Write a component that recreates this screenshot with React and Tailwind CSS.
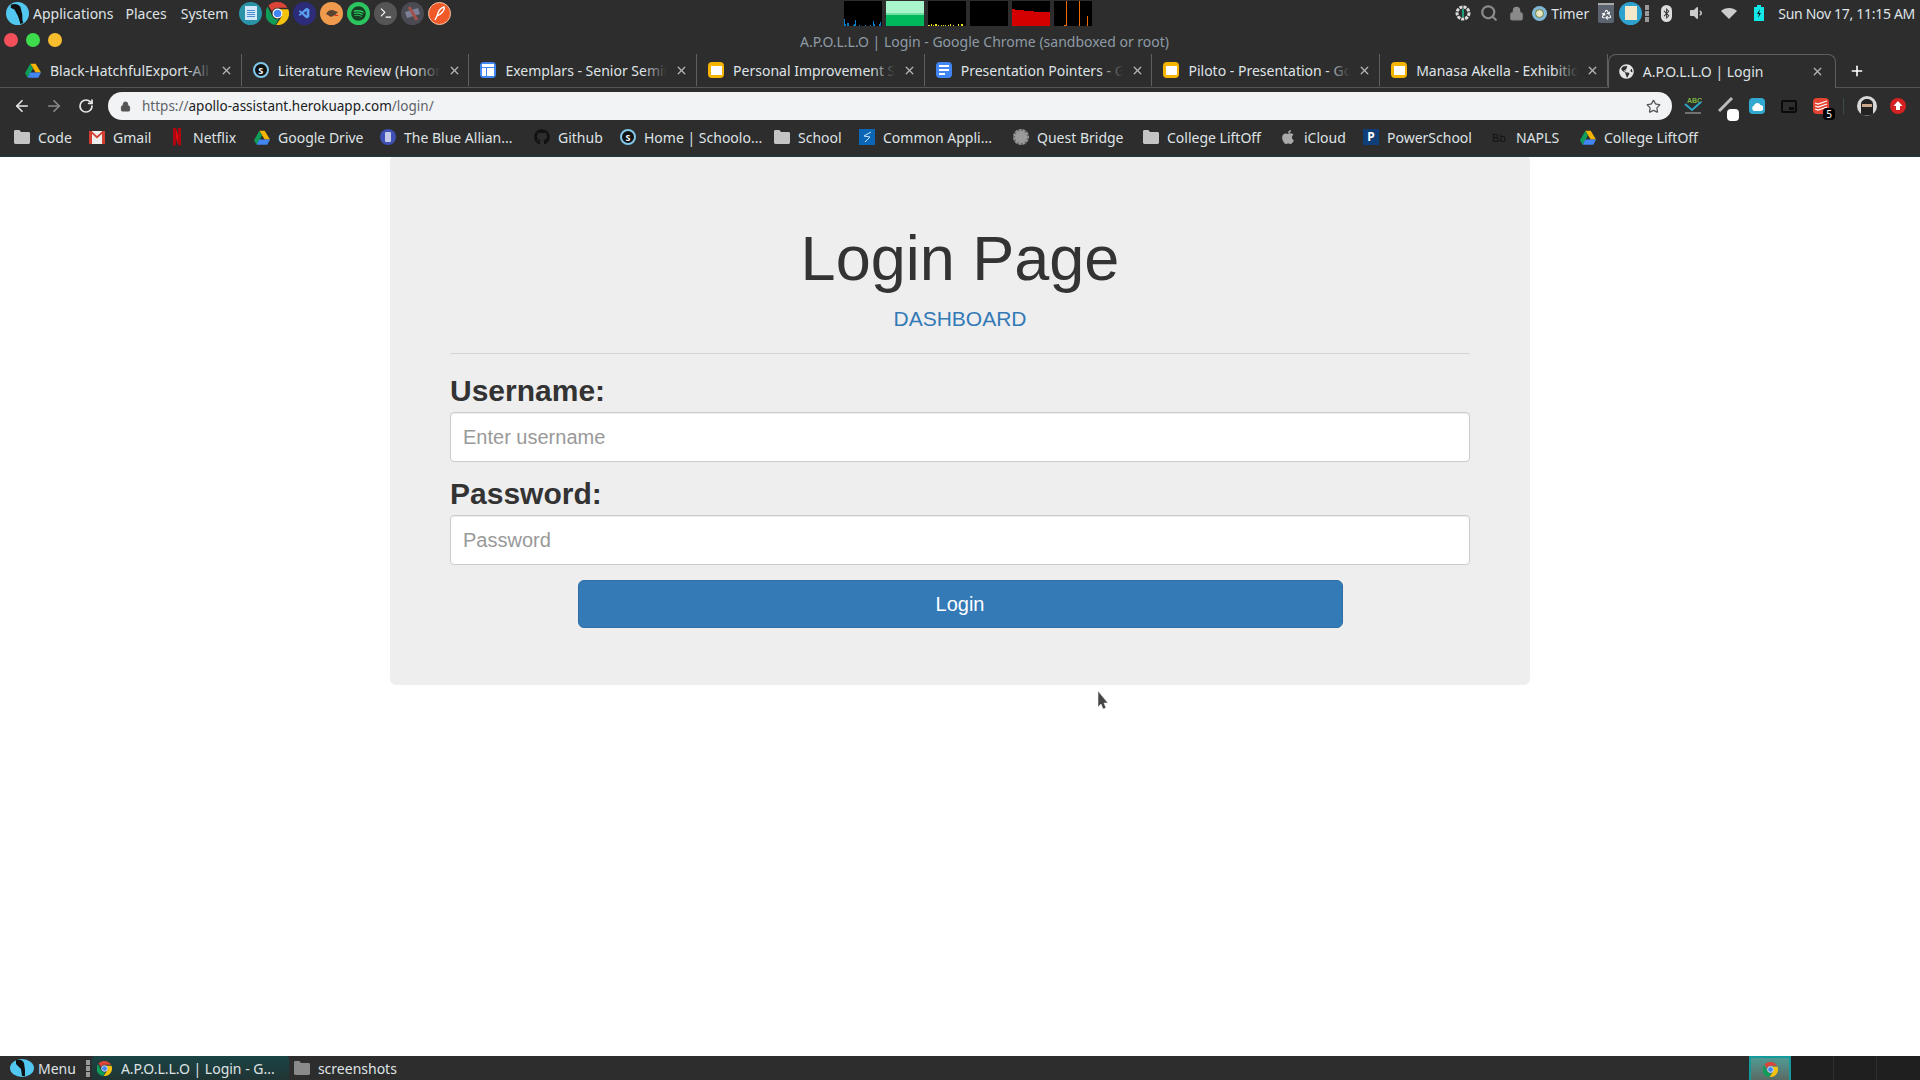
import { ArrowLeft, ArrowRight, Lock, RotateCw, Search, Star, X, Plus, Terminal, Recycle } from 'lucide-react'
import { FaApple, FaBluetoothB, FaGithub, FaGlobeAmericas, FaSpotify, FaVolumeDown } from 'react-icons/fa'
import { VscVscode } from 'react-icons/vsc'

const ui = "font-['Noto_Sans',sans-serif]"

const ChromeIcon = ({ size = 16 }) => (
  <svg width={size} height={size} viewBox="0 0 24 24" className="shrink-0">
    <path d="M12 0a12 12 0 0 1 10.4 6H12a6 6 0 0 0-5.6 3.8L2.5 3.6A12 12 0 0 1 12 0z" fill="#db4437" />
    <path d="M1.6 5 6.8 15a6 6 0 0 0 6.4 2.9L9.7 24A12 12 0 0 1 1.6 5z" fill="#0f9d58" />
    <path d="M23.2 7.5H14a6 6 0 0 1 1.7 8.6L10.6 24A12 12 0 0 0 23.2 7.5z" fill="#f4c20d" />
    <circle cx="12" cy="12" r="4.6" fill="#4285f4" stroke="#fff" strokeWidth="1.2" />
  </svg>
)

const DriveIcon = () => (
  <svg width="16" height="15" viewBox="0 0 24 22" className="shrink-0">
    <path d="M8 1h8l8 13h-8z" fill="#f4b400" />
    <path d="M8 1 0 15l4 7 8-14z" fill="#0f9d58" />
    <path d="M4 22h16l4-8H8z" fill="#4285f4" />
  </svg>
)

const FolderIcon = ({ color = '#c4c4c4' }) => (
  <svg width="16" height="14" viewBox="0 0 16 14" className="shrink-0">
    <path d="M0 1.5C0 .7.6 0 1.4 0h4l1.6 2h7.6c.8 0 1.4.6 1.4 1.4v9.2c0 .8-.6 1.4-1.4 1.4H1.4C.6 14 0 13.4 0 12.6z" fill={color} />
  </svg>
)

const SchoologyIcon = () => (
  <span className="flex h-4 w-4 shrink-0 items-center justify-center rounded-full border-2 border-[#7fc8e8] bg-[#111] text-[9px] font-bold leading-none text-white">S</span>
)

const SheetIcon = ({ kind }) => {
  if (kind === 'slides')
    return (
      <span className="flex h-4 w-4 shrink-0 items-center justify-center rounded-sm bg-[#f4b400]">
        <span className="h-[9px] w-[11px] bg-white" />
      </span>
    )
  if (kind === 'docs')
    return (
      <span className="flex h-4 w-4 shrink-0 flex-col justify-center gap-[2px] rounded-sm bg-[#4285f4] pl-[3px]">
        <span className="h-[2px] w-[10px] bg-white" />
        <span className="h-[2px] w-[10px] bg-white" />
        <span className="h-[2px] w-[6px] bg-white" />
      </span>
    )
  return (
    <span className="flex h-4 w-4 shrink-0 flex-col gap-[1px] rounded-sm bg-[#4285f4] p-[2px]">
      <span className="h-[3px] w-full bg-white" />
      <span className="flex flex-1 gap-[1px]">
        <span className="w-1 bg-white" />
        <span className="flex-1 bg-white" />
      </span>
    </span>
  )
}

const tabIcons = {
  drive: <DriveIcon />,
  schoology: <SchoologyIcon />,
  sites: <SheetIcon kind="sites" />,
  slides: <SheetIcon kind="slides" />,
  docs: <SheetIcon kind="docs" />,
}

const tabs = [
  { title: 'Black-HatchfulExport-All', icon: 'drive' },
  { title: 'Literature Review (Honors)', icon: 'schoology' },
  { title: 'Exemplars - Senior Seminar', icon: 'sites' },
  { title: 'Personal Improvement Speech', icon: 'slides' },
  { title: 'Presentation Pointers - Google', icon: 'docs' },
  { title: 'Piloto - Presentation - Google', icon: 'slides' },
  { title: 'Manasa Akella - Exhibition', icon: 'slides' },
]

const bookmarks = [
  { label: 'Code', w: 'w-[75px]', icon: <FolderIcon /> },
  {
    label: 'Gmail',
    w: 'w-[80px]',
    icon: (
      <svg width="16" height="13" viewBox="0 0 16 13" className="shrink-0">
        <rect width="16" height="13" fill="#eee" />
        <path d="M0 0h3v13H0zM13 0h3v13h-3z" fill="#d23f31" />
        <path d="M0 0h2.5L8 5l5.500-5H16L8 7.500z" fill="#d23f31" />
      </svg>
    ),
  },
  {
    label: 'Netflix',
    w: 'w-[85px]',
    icon: (
      <svg width="16" height="18" viewBox="0 0 16 18" className="shrink-0">
        <path d="M4 0h3l5 17-3-.5z" fill="#e50914" />
        <path d="M4 0h3v17l-3 .8zM9 0h3v17.800L9 17z" fill="#b00610" />
      </svg>
    ),
  },
  { label: 'Google Drive', w: 'w-[126px]', icon: <DriveIcon /> },
  {
    label: 'The Blue Allian...',
    w: 'w-[154px]',
    icon: (
      <span className="flex h-4 w-4 shrink-0 items-center justify-center rounded-full bg-[#3f51b5]">
        <span className="h-[10px] w-[6px] rounded-[1px] bg-[#c5cae9]" />
      </span>
    ),
  },
  { label: 'Github', w: 'w-[86px]', icon: <FaGithub className="h-4 w-4 shrink-0 text-[#111]" /> },
  { label: 'Home | Schoolo...', w: 'w-[154px]', icon: <SchoologyIcon /> },
  { label: 'School', w: 'w-[85px]', icon: <FolderIcon /> },
  {
    label: 'Common Appli...',
    w: 'w-[154px]',
    icon: (
      <span className="flex h-4 w-4 shrink-0 items-center justify-center bg-[#0b66b8]">
        <svg width="10" height="12" viewBox="0 0 10 12" fill="none" stroke="#cfe6f8">
          <path d="M9 1 2 5l6 1-5 5" />
        </svg>
      </span>
    ),
  },
  {
    label: 'Quest Bridge',
    w: 'w-[130px]',
    icon: <span className="h-4 w-4 shrink-0 rounded-full border-2 border-dotted border-[#6b6b6b] bg-[#9a9a9a]" />,
  },
  { label: 'College LiftOff', w: 'w-[137px]', icon: <FolderIcon /> },
  { label: 'iCloud', w: 'w-[83px]', icon: <FaApple className="h-4 w-4 shrink-0 text-[#aaa]" /> },
  {
    label: 'PowerSchool',
    w: 'w-[129px]',
    icon: (
      <span className="flex h-4 w-4 shrink-0 items-center justify-center bg-[#0f3f78] text-[12px] font-bold leading-none text-white">P</span>
    ),
  },
  {
    label: 'NAPLS',
    w: 'w-[88px]',
    icon: <span className="w-4 shrink-0 text-[11px] leading-none text-[#111]">Bb</span>,
  },
  { label: 'College LiftOff', w: 'w-[130px]', icon: <DriveIcon /> },
]

const Bar = ({ x, h, color }) => <rect x={x} y={25 - h} width="1" height={h} fill={color} />

const Graph = ({ children, bg = 'bg-black' }) => (
  <svg width="38" height="25" viewBox="0 0 38 25" className={bg}>
    {children}
  </svg>
)

const cpuBars = [[0, 7], [1, 2], [3, 3], [4, 3], [9, 1], [10, 2], [11, 6], [15, 1], [21, 1], [26, 1], [29, 5], [30, 2], [35, 2], [36, 4]]
const netBars = [[0, 1], [1, 1], [3, 2], [5, 1], [7, 2], [8, 2], [10, 1], [13, 1], [15, 1], [17, 1], [20, 1], [22, 2], [25, 1], [30, 2], [33, 2], [34, 2]]

function SystemPanel() {
  return (
    <div className="flex h-[26px] shrink-0 items-center text-[14px] text-[#dfe3e6]">
      <svg width="23" height="23" viewBox="0 0 24 24" className="ml-[6px] shrink-0">
        <circle cx="12" cy="12" r="12" fill="#52c8f0" />
        <path d="M5 3c4-2 8-1 10 2l2 8c0 3 0 7 1 9l-3 1c-1-4-2-8-4-11L9 8 5 6z" fill="#111" />
      </svg>
      <span className="ml-[4px]">Applications</span>
      <span className="ml-[12px]">Places</span>
      <span className="ml-[14px]">System</span>

      <div className="ml-[11px] flex items-center gap-[4px]">
        <span className="flex h-[23px] w-[23px] items-center justify-center rounded-full bg-[#2a93a8]">
          <span className="flex h-[14px] w-[12px] flex-col justify-center gap-[1px] bg-[#d4e8fb] px-[2px]">
            <span className="h-[1px] bg-[#4a8fd0]" />
            <span className="h-[1px] bg-[#4a8fd0]" />
            <span className="h-[1px] bg-[#4a8fd0]" />
            <span className="h-[1px] bg-[#4a8fd0]" />
          </span>
        </span>
        <ChromeIcon size={23} />
        <span className="flex h-[23px] w-[23px] items-center justify-center rounded-full bg-[#2c2c7a]">
          <VscVscode className="h-[13px] w-[13px] text-[#5aa0f0]" />
        </span>
        <span className="flex h-[23px] w-[23px] items-center justify-center rounded-full bg-[#f09a4e]">
          <svg width="14" height="10" viewBox="0 0 14 10">
            <path d="M1 6c2-4 6-5 9-3l3 1-3 3-4 2z" fill="#5a4330" />
            <rect x="10" y="7" width="3" height="1" fill="#d22" />
          </svg>
        </span>
        <span className="flex h-[23px] w-[23px] items-center justify-center rounded-full bg-[#2cc45f]">
          <FaSpotify className="h-[15px] w-[15px] text-[#163f22]" />
        </span>
        <span className="flex h-[23px] w-[23px] items-center justify-center rounded-full bg-[#555]">
          <Terminal className="h-[14px] w-[14px] text-white" strokeWidth={2} />
        </span>
        <span className="flex h-[23px] w-[23px] items-center justify-center rounded-full bg-[#4a4a52]">
          <svg width="17" height="15" viewBox="0 0 17 15">
            <path d="M1 6 14 2l2 6-13 4z" fill="#7c8098" />
            <path d="M5 1l8 13" stroke="#a0524a" strokeWidth="3" />
          </svg>
        </span>
        <span className="flex h-[23px] w-[23px] items-center justify-center rounded-full border border-[#f3c4a8] bg-[#f05a28]">
          <svg width="13" height="15" viewBox="0 0 13 15" fill="none" stroke="#fff" strokeWidth="1.400">
            <path d="M11 1c1 3-2 6-5 8l-2 1 1-3c1-3 3-5 6-6zM4 10l-2 4" />
          </svg>
        </span>
      </div>

      <div className="ml-[393px] flex items-center gap-[4px]">
        <Graph>
          {cpuBars.map(([x, h]) => (
            <Bar key={x} x={x} h={h} color="#0a7fc8" />
          ))}
        </Graph>
        <Graph bg="bg-[#00b85c]">
          <rect width="38" height="12" fill="#a8f5cc" />
          <rect y="12" width="38" height="2" fill="#6fe0a4" />
        </Graph>
        <Graph>
          {netBars.map(([x, h]) => (
            <Bar key={x} x={x} h={h} color="#f4e021" />
          ))}
        </Graph>
        <Graph />
        <Graph>
          <path d="M0 8h3v1h9v1h10v1h16v14H0z" fill="#d40000" />
        </Graph>
        <Graph>
          <Bar x={12} h={25} color="#f06c00" />
          <Bar x={25} h={25} color="#f06c00" />
          <Bar x={33} h={10} color="#f06c00" />
          <rect x="10" y="24" width="2" height="1" fill="#f06c00" />
        </Graph>
      </div>

      <div className="ml-auto flex items-center">
        <svg width="16" height="16" viewBox="0 0 16 16" className="shrink-0">
          <circle cx="8" cy="8" r="6" fill="none" stroke="#ddd" strokeWidth="3" strokeDasharray="3 1" />
          <path d="M8 4v8" stroke="#1fa07a" strokeWidth="2" />
        </svg>
        <Search className="ml-[9px] h-[18px] w-[18px] text-[#8a8a8a]" strokeWidth={3} />
        <Lock className="ml-[11px] h-[15px] w-[15px] text-[#8a8a8a]" fill="#8a8a8a" strokeWidth={2} />
        <span className="ml-[8px] flex h-[15px] w-[15px] items-center justify-center rounded-full bg-[#7fb8d8]">
          <span className="h-[9px] w-[9px] rounded-full border border-[#6a7a3a] bg-[#e8e4c0]" />
        </span>
        <span className="ml-[4px]">Timer</span>
        <span className="ml-[9px] flex h-[20px] w-[16px] items-center justify-center rounded-b-[2px] border-t-2 border-[#aaa] bg-[#5c6470]">
          <Recycle className="h-[11px] w-[11px] text-white" strokeWidth={2.400} />
        </span>
        <span className="ml-[5px] flex h-[23px] w-[23px] items-center justify-center rounded-full bg-[#2ea3cf]">
          <span className="h-[14px] w-[12px] bg-[#f5e8c8]" />
        </span>
        <span className="ml-[3px] flex flex-col gap-[1px]">
          <span className="h-[5px] w-[4px] bg-[#999]" />
          <span className="h-[5px] w-[4px] bg-[#999]" />
          <span className="h-[5px] w-[4px] bg-[#999]" />
        </span>
        <span className="ml-[12px] flex h-[17px] w-[11px] items-center justify-center rounded-full bg-[#ddd]">
          <FaBluetoothB className="h-[11px] w-[11px] text-[#2d2d2d]" />
        </span>
        <FaVolumeDown className="ml-[16px] h-[16px] w-[16px] text-[#ccc]" />
        <svg width="16" height="11" viewBox="0 0 16 11" className="ml-[17px] shrink-0">
          <path d="M0 3c4-4 12-4 16 0l-8 8z" fill="#ccc" />
        </svg>
        <svg width="10" height="16" viewBox="0 0 10 16" className="ml-[17px] shrink-0">
          <path d="M3 0h4v2h3v14H0V2h3z" fill="#12e8e8" />
          <path d="M6 4 3 9h2l-1 4 3-5H5z" fill="#111" />
        </svg>
        <span className="ml-[14px] mr-[5px] whitespace-nowrap tracking-[-0.3px]">Sun Nov 17, 11:15 AM</span>
      </div>
    </div>
  )
}

function TabStrip() {
  return (
    <div className="flex h-[34px] shrink-0 items-end border-b border-[#555] pl-[14px] text-[14px] text-[#dfe3e6]">
      {tabs.map((tab) => (
        <div key={tab.title} className="relative mb-[1px] flex h-[32px] w-[227.7px] shrink-0 items-center border-r border-[#5f5f5f] pl-[11px]">
          <span className="flex w-4 shrink-0 justify-center">{tabIcons[tab.icon]}</span>
          <div className="relative ml-[9px] w-[162px] overflow-hidden whitespace-nowrap">
            {tab.title}
            <span className="absolute inset-y-0 right-0 w-6 bg-gradient-to-r from-transparent to-[#2d2d2d]" />
          </div>
          <X className="ml-[8px] h-[13px] w-[13px] shrink-0 text-[#b5b5b5]" strokeWidth={2.400} />
        </div>
      ))}
      <div className="relative -mb-px flex h-[34px] w-[228px] shrink-0 items-center rounded-t-lg border border-b-0 border-[#5f5f5f] bg-[#2d2d2d] pl-[10px]">
        <FaGlobeAmericas className="h-[15px] w-[15px] shrink-0 text-[#e5e5e5]" />
        <span className="ml-[9px] w-[160px] whitespace-nowrap">A.P.O.L.L.O | Login</span>
        <X className="ml-[8px] h-[13px] w-[13px] shrink-0 text-[#b5b5b5]" strokeWidth={2.400} />
      </div>
      <Plus className="mb-[8px] ml-[13px] h-[16px] w-[16px] text-white" strokeWidth={2.400} />
    </div>
  )
}

function Toolbar() {
  return (
    <div className="flex h-[36px] shrink-0 items-center">
      <ArrowLeft className="ml-[13px] h-[18px] w-[18px] text-[#e8e8e8]" strokeWidth={2.200} />
      <ArrowRight className="ml-[14px] h-[18px] w-[18px] text-[#8a8a8a]" strokeWidth={2.200} />
      <RotateCw className="ml-[15px] h-[16px] w-[16px] text-[#e8e8e8]" strokeWidth={2.600} />
      <div className="ml-[14px] flex h-[28px] w-[1564px] items-center rounded-full bg-[#f1f3f4] pl-[12px] pr-[11px] text-[13.500px]">
        <Lock className="h-[11px] w-[11px] text-[#555]" fill="#555" strokeWidth={2} />
        <span className="ml-[11px] text-[#5f6368]">
          https://<span className="text-[#202124]">apollo-assistant.herokuapp.com</span>/login/
        </span>
        <Star className="ml-auto h-[15px] w-[15px] text-[#555]" strokeWidth={2} />
      </div>

      <svg width="22" height="20" viewBox="0 0 22 20" className="ml-[10px] shrink-0">
        <text x="5" y="7" fontSize="7" fontWeight="700" fill="#7cb342" fontFamily="Liberation Sans">ABC</text>
        <path d="M3 8l7 6 9-8" fill="none" stroke="#2aa6c8" strokeWidth="2" />
        <path d="M3 17h16" stroke="#888" strokeWidth="1.500" />
      </svg>
      <div className="relative ml-[10px] h-6 w-[22px] shrink-0">
        <svg width="16" height="16" viewBox="0 0 16 16" className="absolute left-[4px] top-0.5">
          <path d="M1 15 14 2" stroke="#bbb" strokeWidth="3" />
        </svg>
        <span className="absolute bottom-[-3px] right-[-3px] h-3 w-3 rounded-sm bg-white" />
      </div>
      <span className="ml-[13px] flex h-4 w-4 shrink-0 items-center justify-center rounded-sm bg-[#31a8d0]">
        <svg width="12" height="9" viewBox="0 0 12 9">
          <path d="M3 9a3 3 0 0 1 0-5.500A3.500 3.500 0 0 1 9.500 3 3 3 0 0 1 9 9z" fill="#fff" />
        </svg>
      </span>
      <span className="ml-[16px] flex h-[13px] w-[16px] shrink-0 items-end justify-end rounded-[2px] border-2 border-[#0a0a0a] p-[1px]">
        <span className="h-[3px] w-[5px] bg-[#0a0a0a]" />
      </span>
      <div className="relative ml-[16px] h-4 w-4 shrink-0 rounded-sm bg-[#e44332]">
        <svg width="16" height="16" viewBox="0 0 16 16" fill="none" stroke="#fff" strokeWidth="1.200" className="absolute inset-0">
          <path d="M2 5l3 1 9-3M2 8l3 1 9-3M2 11l3 1 9-3" />
        </svg>
        <span className="absolute bottom-[-6px] right-[-6px] flex h-[12px] w-[12px] items-center justify-center rounded-sm bg-black text-[10px] leading-none text-white">5</span>
      </div>
      <span className="ml-[14px] h-[16px] w-px shrink-0 bg-[#3c4a4a]" />
      <svg width="20" height="20" viewBox="0 0 20 20" className="ml-[13px] shrink-0">
        <circle cx="10" cy="10" r="10" fill="#d8d8d8" />
        <path d="M4 18V8c0-3 3-5 6-5s6 2 6 5v10c-3 2-9 2-12 0z" fill="#222" />
        <rect x="5" y="8" width="10" height="3" fill="#c9a58a" />
      </svg>
      <svg width="16" height="16" viewBox="0 0 16 16" className="ml-[13px] shrink-0">
        <circle cx="8" cy="8" r="8" fill="#d32020" />
        <path d="M8 3l4.500 5H10v4H6V8H3.500z" fill="#fff" />
      </svg>
    </div>
  )
}

function BookmarksBar() {
  return (
    <div className="flex h-[32px] shrink-0 items-center pb-[6px] pl-[14px] text-[14px] text-[#dfe3e6]">
      {bookmarks.map((item, i) => (
        <div key={i} className={`flex shrink-0 items-center gap-2 whitespace-nowrap ${item.w}`}>
          <span className="flex w-4 shrink-0 items-center justify-center">{item.icon}</span>
          {item.label}
        </div>
      ))}
    </div>
  )
}

function Taskbar() {
  return (
    <div className={`flex h-6 shrink-0 items-center bg-[#2d2d2d] text-[14px] text-[#dfe3e6] ${ui}`}>
      <svg width="24" height="18" viewBox="0 0 24 18" className="ml-[10px] shrink-0">
        <ellipse cx="12" cy="9" rx="12" ry="9" fill="#52c8f0" />
        <path d="M6 1c4-1 7 0 8 3l1 7v6h-3l-1-7-5-5z" fill="#111" />
      </svg>
      <span className="ml-[4px]">Menu</span>
      <span className="ml-[10px] flex flex-col gap-[1px]">
        <span className="h-[5px] w-[4px] bg-[#999]" />
        <span className="h-[5px] w-[4px] bg-[#999]" />
        <span className="h-[5px] w-[4px] bg-[#999]" />
      </span>
      <div className="ml-[2px] flex h-full w-[197px] items-center rounded-t-sm bg-gradient-to-b from-[#1a4444] to-[#203434] pl-[4px]">
        <span className="ml-[1px]"><ChromeIcon size={15} /></span>
        <span className="ml-[9px] whitespace-nowrap">A.P.O.L.L.O | Login - G...</span>
      </div>
      <span className="ml-[5px]"><FolderIcon color="#8a8a8a" /></span>
      <span className="ml-[8px]">screenshots</span>
      <div className="ml-auto flex h-full items-stretch">
        <div className="flex w-[42px] items-center justify-center border-2 border-b-0 border-[#139a9a] bg-gradient-to-b from-[#4f9a94] to-[#5a6a64]">
          <ChromeIcon size={15} />
        </div>
        <div className="w-[43px] border-r border-[#2e2e2e] bg-[#1f1f1f]" />
        <div className="w-[43px] border-r border-[#2e2e2e] bg-[#1f1f1f]" />
        <div className="w-[43px] bg-[#1f1f1f]" />
      </div>
    </div>
  )
}

export default function App() {
  return (
    <div className="relative flex h-screen w-full flex-col overflow-hidden bg-white">
      <header className={`flex shrink-0 flex-col bg-[#2d2d2d] ${ui}`}>
        <SystemPanel />
        <div className="flex h-[28px] shrink-0 items-center pl-[4px] pt-[2px]">
          <div className="mb-[2px] flex gap-[8px]">
            <span className="h-[14px] w-[14px] rounded-full bg-[#f4505c]" />
            <span className="h-[14px] w-[14px] rounded-full bg-[#3ddc4c]" />
            <span className="h-[14px] w-[14px] rounded-full bg-[#f8bd2e]" />
          </div>
          <span className="ml-[738px] whitespace-nowrap text-[14px] text-[#8e9ba6]">A.P.O.L.L.O | Login - Google Chrome (sandboxed or root)</span>
        </div>
        <TabStrip />
        <Toolbar />
        <BookmarksBar />
        <div className="h-px bg-[#1d3b3b]" />
      </header>

      <main className="min-h-0 flex-1 bg-white font-['Liberation_Sans',sans-serif] text-[#333]">
        <div className="mx-auto w-[1140px] rounded-b-md rounded-t-sm bg-[#eee] px-[60px] pb-[57px] pt-[67px]">
          <h1 className="text-center text-[63px] font-normal leading-[69px]">Login Page</h1>
          <p className="mt-[11px] text-center text-[21px] leading-[30px] text-[#337ab7]">DASHBOARD</p>
          <hr className="mt-[19px] border-t border-[#d5d5d5]" />
          <label className="mt-[16px] block text-[30px] font-bold leading-[42px]">Username:</label>
          <input
            placeholder="Enter username"
            className="block h-[50px] w-full rounded-[4px] border border-[#ccc] bg-white px-3 text-[20px] shadow-[inset_0_1px_1px_rgba(0,0,0,0.075)] placeholder:text-[#999]"
          />
          <label className="mt-[11px] block text-[30px] font-bold leading-[42px]">Password:</label>
          <input
            type="password"
            placeholder="Password"
            className="block h-[50px] w-full rounded-[4px] border border-[#ccc] bg-white px-3 text-[20px] shadow-[inset_0_1px_1px_rgba(0,0,0,0.075)] placeholder:text-[#999]"
          />
          <button className="mx-auto mt-[15px] block h-[48px] w-[765px] rounded-[6px] border border-[#2e6da4] bg-[#337ab7] text-[20px] text-white">
            Login
          </button>
        </div>
      </main>

      <svg width="12" height="20" viewBox="0 0 12 20" className="absolute left-[1097px] top-[690px]">
        <path d="M1 1v16l3-3 2 5 3-1-2-5h4z" fill="#444" stroke="#eee" strokeWidth="0.600" />
      </svg>

      <Taskbar />
    </div>
  )
}
